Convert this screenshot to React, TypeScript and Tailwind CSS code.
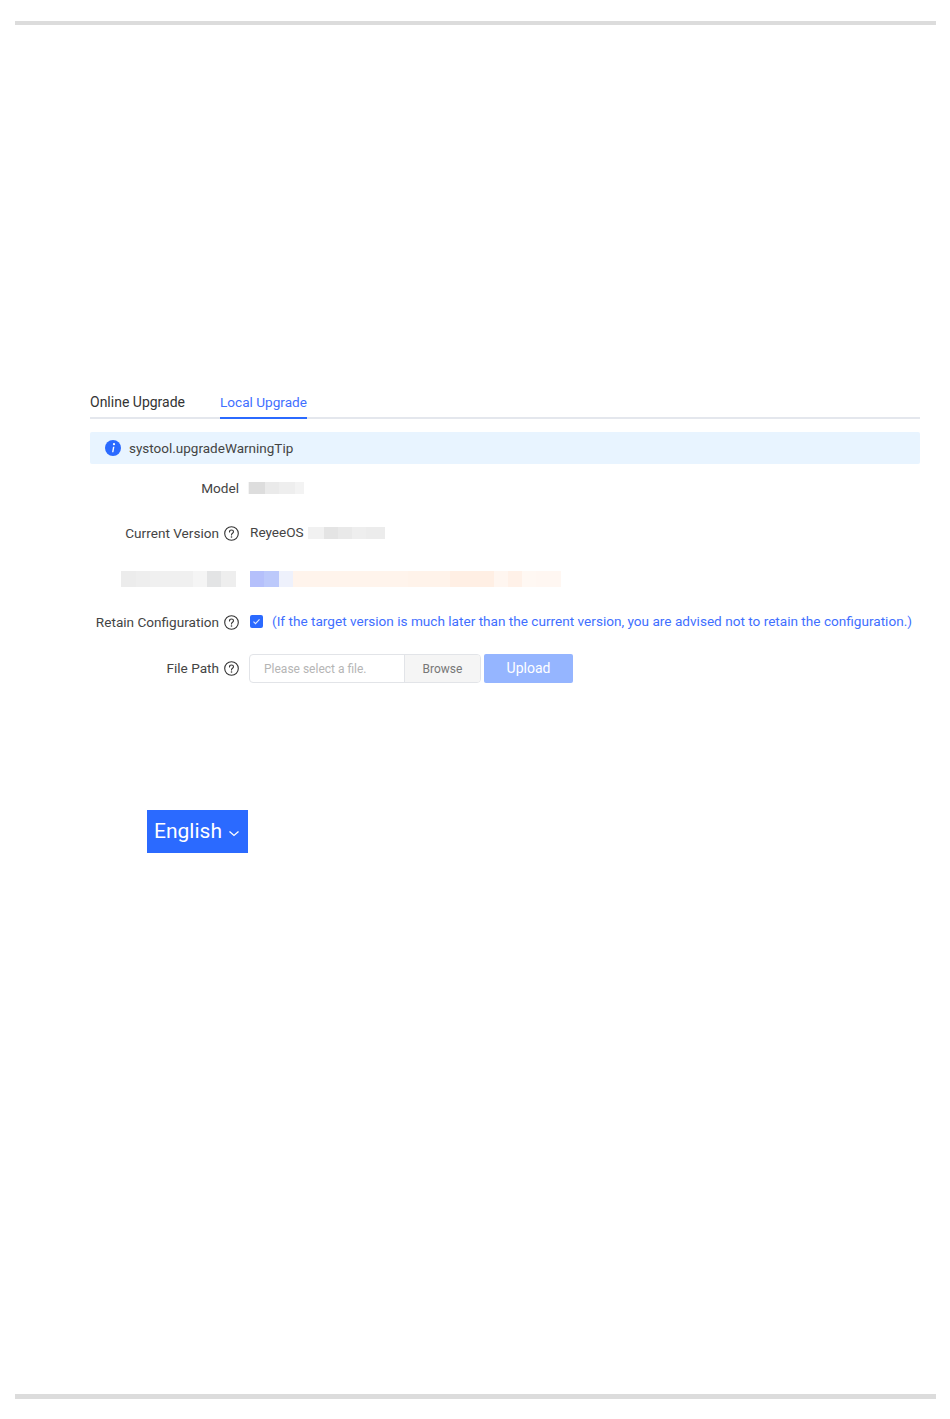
import React from "react";

function Blur({ cells, h }: { cells: [number, string][]; h: string }) {
  return (
    <div className={`flex ${h}`}>
      {cells.map(([w, c], i) => (
        <div key={i} style={{ width: w, background: c }} />
      ))}
    </div>
  );
}

function Help() {
  return (
    <svg width="15" height="15" viewBox="0 0 15 15" fill="none" className="shrink-0">
      <circle cx="7.5" cy="7.5" r="6.8" stroke="#333" strokeWidth="1.1" />
      <path d="M5.5 5.9c0-1.2.9-1.9 2-1.9s2 .7 2 1.8c0 1.5-2 1.5-2 3.1" stroke="#333" strokeWidth="1.1" strokeLinecap="round" />
      <circle cx="7.5" cy="11" r=".8" fill="#333" />
    </svg>
  );
}

function Label({ text, help }: { text: string; help?: boolean }) {
  return (
    <div className="w-[149px] shrink-0 flex items-center justify-end gap-[5px] text-[13.6px] text-[#444] whitespace-nowrap">
      <span>{text}</span>
      {help && <Help />}
    </div>
  );
}

export default function App() {
  return (
    <div className="h-[1419px] bg-white px-[15px] pr-[14px] flex flex-col font-['Roboto','Noto_Sans',sans-serif]">
      <div className="mt-[21px] h-[4px] bg-[#dcdcdc] shrink-0" />

      <div className="ml-[75px] mr-[16px] mt-[365px] shrink-0">
        <div className="flex h-[29px] border-b-2 border-[#e4e7ed] gap-[35px]">
          <div className="text-[14px] text-[#333] leading-[24px] h-[29px]">Online Upgrade</div>
          <div className="text-[13.6px] text-[#3f6fff] leading-[24px] h-[29px] border-b-2 border-[#2b6aff]">Local Upgrade</div>
        </div>

        <div className="mt-[13px] h-[32px] bg-[#e8f4ff] rounded-[2px] flex items-center pl-[15px] gap-[8px] text-[13.5px] text-[#444]">
          <svg width="16" height="16" viewBox="0 0 16 16" className="shrink-0">
            <circle cx="8" cy="8" r="8" fill="#2b6aff" />
            <circle cx="9" cy="4.2" r="1.1" fill="#fff" />
            <path d="M8 6.8h1.4l-1 5.4H7.1z" fill="#fff" />
          </svg>
          <span>systool.upgradeWarningTip</span>
        </div>

        <div className="mt-[14px] h-[20px] flex items-center gap-[9px]">
          <Label text="Model" />
          <Blur h="h-[12px]" cells={[[1, "#f4f4f4"], [16, "#dddddd"], [14, "#eaeaea"], [16, "#eeeeee"], [9, "#f3f3f3"]]} />
        </div>

        <div className="mt-[25px] h-[20px] flex items-center gap-[11px]">
          <Label text="Current Version" help />
          <span className="text-[13.6px] text-[#444] -mt-[2px]">ReyeeOS</span>
          <div className="-ml-[7px]">
            <Blur h="h-[12px]" cells={[[16, "#f1f1f1"], [14, "#e4e4e4"], [14, "#e9e9e9"], [14, "#eeeeee"], [19, "#ececec"]]} />
          </div>
        </div>

        <div className="mt-[28px] h-[16px] flex items-center">
          <div className="w-[146px] shrink-0 flex justify-end">
            <Blur h="h-[16px]" cells={[[15, "#ececec"], [14, "#eeeeee"], [43, "#f0f0f0"], [14, "#f5f5f5"], [14, "#e3e4e5"], [15, "#eeeeee"]]} />
          </div>
          <div className="ml-[14px]">
            <Blur h="h-[16px]" cells={[[14, "#b5c0fb"], [15, "#bcc9fb"], [14, "#eef1fc"], [115, "#fff4ec"], [42, "#fff3ea"], [44, "#ffefe4"], [14, "#fff6f0"], [14, "#fff1e8"], [14, "#fff8f3"], [25, "#fff7f2"]]} />
          </div>
        </div>

        <div className="mt-[25px] h-[20px] flex items-center">
          <Label text="Retain Configuration" help />
          <div className="ml-[11px] -mt-[1px] w-[13px] h-[13px] rounded-[2px] bg-[#2b6aff] flex items-center justify-center shrink-0">
            <svg width="9" height="9" viewBox="0 0 9 9" fill="none">
              <path d="M1.5 4.6l2 2 4-4.2" stroke="#dfe8ff" strokeWidth="1.1" />
            </svg>
          </div>
          <span className="ml-[9px] -mt-[2px] text-[13.6px] text-[#3f6fff] whitespace-nowrap">
            (If the target version is much later than the current version, you are advised not to retain the configuration.)
          </span>
        </div>

        <div className="mt-[22px] h-[29px] flex items-center">
          <Label text="File Path" help />
          <div className="ml-[10px] w-[232px] h-[29px] flex border border-[#e2e4e8] rounded-[4px] overflow-hidden">
            <div className="w-[155px] pl-[14px] flex items-center text-[12px] text-[#b5b5b5] border-r border-[#e2e4e8]">Please select a file.</div>
            <div className="flex-1 bg-[#f5f5f5] flex items-center justify-center text-[12px] text-[#777] pt-[1px]">Browse</div>
          </div>
          <div className="ml-[3px] w-[89px] h-[29px] rounded-[2px] bg-[#95b5ff] flex items-center justify-center text-[14px] text-white">Upload</div>
        </div>
      </div>

      <div className="ml-[132px] mt-[127px] w-[101px] h-[43px] bg-[#2b6aff] flex items-center pl-[7px] gap-[6px] text-white text-[21px] shrink-0">
        <span>English</span>
        <svg width="12" height="8" viewBox="0 0 12 8" fill="none" className="mt-[4px]">
          <path d="M1.5 1.5L6 5.5l4.5-4" stroke="#fff" strokeWidth="1.3" />
        </svg>
      </div>

      <div className="mt-auto mb-[20px] h-[5px] bg-[#dcdcdc] shrink-0" />
    </div>
  );
}
